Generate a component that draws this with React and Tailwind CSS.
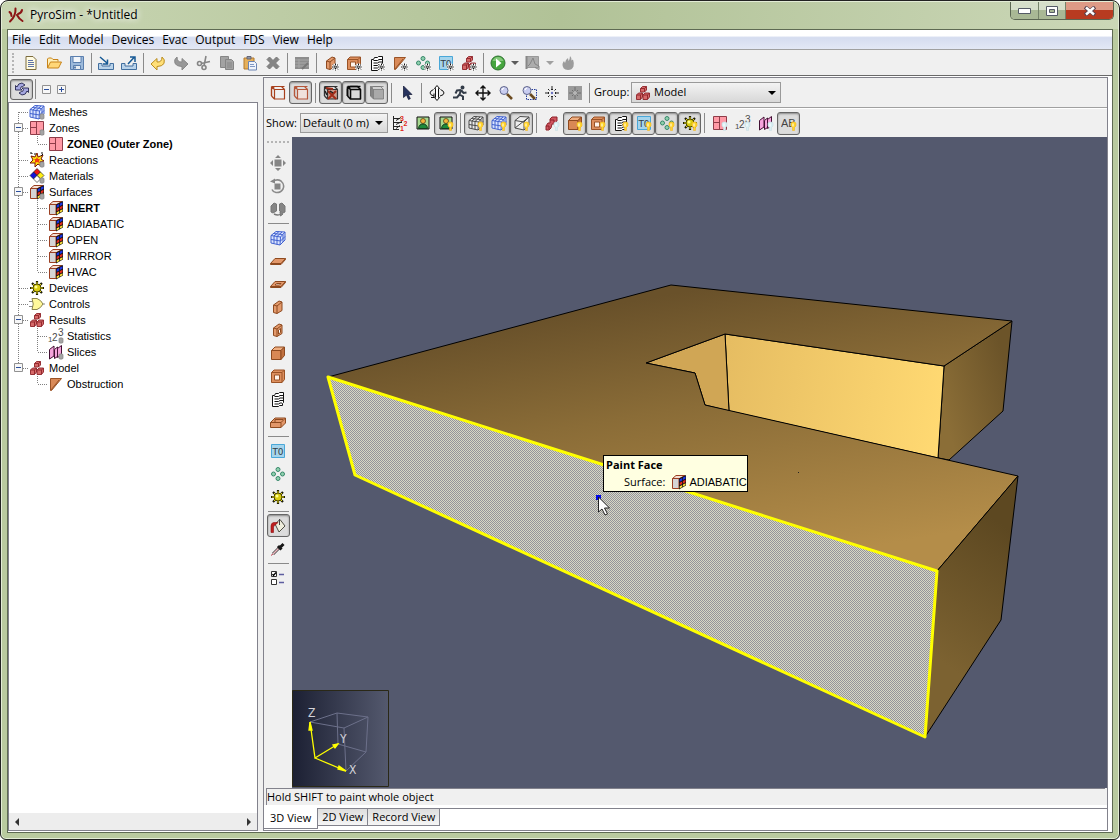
import React, { useState } from 'react'
import clsx from 'clsx'

const Svg = ({ children, size = 16, ...rest }) => (
    <svg width={size} height={size} viewBox="0 0 16 16" fill="none" aria-hidden="true" className="shrink-0" {...rest}>{children}</svg>
)

/* small marks drawn over the corner of an icon */
const Star = () => (
    <g stroke="#111" strokeWidth="1">
        <path d="M12.5 8.5v7M9 12h7M10 9.500l5 5M15 9.500l-5 5" stroke="#fff" strokeWidth="2.400" />
        <path d="M12.500 8.500v7M9 12h7M10 9.500l5 5M15 9.500l-5 5" strokeDasharray="1.600 .5" />
        <path d="M12 11.500h1v1h-1z" fill="#fff" stroke="none" />
    </g>
)
const Bulb = ({ off }) => (
    <g>
        <path d="M10 8.500c0-1 1-1.500 2.500-1.500s2.500.5 2.500 1.500v2.500l-1.500 1.500v3h-2v-3L10 11z" fill={off ? '#d9eef2' : '#ffd52b'} stroke={off ? '#c8dde4' : '#f0b429'} strokeWidth=".6" />
        <path d="M11.500 8.500h1v3h-1z" fill="#fff" />
    </g>
)
const Can = () => <path d="M11 10.500q2-1.500 4 0v4q-2 1.500-4 0z" fill="#a5a5a5" stroke="#858585" strokeWidth=".7" />

const Mesh = ({ c = '#4262cf', f = '#dbe5ff' }) => (
    <g stroke={c} strokeWidth="1">
        <path d="M1 5.500 6 1.500 15 2v8l-5 5-9-2z" fill={f} />
        <path d="M1 5.500 10.500 7 15 2M10.500 7 10 15M4 6v7.500M7 6.500v8M1 9.500l9.500 1.500L15 6.500M13 4.500v7.500M3.500 3.500 12.500 4.500M4 6l5-4.500M7 6.500 12 2" />
    </g>
)
const Cube = ({ top = '#efae80', front = '#d98855', side = '#c0703f', line = '#8e4a20' }) => (
    <g stroke={line} strokeWidth="1" strokeLinejoin="round">
        <path d="M1.500 5.500 5 2h9.500L11 5.500z" fill={top} />
        <path d="M1.500 5.500H11v9H1.500z" fill={front} />
        <path d="M11 5.500 14.500 2v8.500L11 14.500z" fill={side} />
    </g>
)
const Wall = () => (
    <g stroke="#8e4a20" strokeLinejoin="round">
        <path d="M3.500 6 9 2l3 1v8.500L7 14.500l-3.500-1z" fill="#e39a6c" />
        <path d="M3.500 6 7 7l5-4M7 7v7.500" />
    </g>
)
const Room = () => (
    <g stroke="#9a5326">
        <path d="M1.500 4.500 4 2h10.500v9.500l-2.500 3H1.500z" fill="#dd8f5e" />
        <path d="M1.500 4.500H12v10M12 4.500 14.500 2" />
        <path d="M4.500 7h5v5h-5z" fill="#fff3ea" />
    </g>
)
const Vent = () => (
    <g stroke="#111">
        <path d="M2.500 4.500h2l1-2h3l1-1h4v10l-1 1v2h-3l-1 1h-6z" fill="#fff" />
        <path d="M4.500 5.500h4l1.500-1h3M4.500 8h4L10 7h3M4.500 10.500h4L10 9.500h3M4.500 13h4L10 12h2" strokeWidth="1" />
    </g>
)
const Tri = () => <path d="M2.500 2.500h11L3.500 14.500h-1zM3 14 11 4" fill="#d98a58" stroke="#9a5326" />
const Dots = () => (
    <g fill="#8fd0ae" stroke="#37876a">
        <circle cx="8" cy="3.500" r="2" /><circle cx="3.500" cy="8" r="2" /><circle cx="12.500" cy="8" r="2" /><circle cx="8" cy="12.500" r="2" />
    </g>
)
const Temp = () => (
    <g>
        <path d="M1.500 1.500h13v13h-13z" fill="#a5d4ec" stroke="#49a7d8" />
        <text x="8" y="11.500" textAnchor="middle" fontSize="9" fontFamily="DejaVu Sans, sans-serif" fill="#333c44">T0</text>
    </g>
)
const Blocks = () => (
    <g fill="#d66a6a" stroke="#8d2328" strokeWidth=".9" strokeLinejoin="round">
        <path d="M5.500 3.500 7.500 1.500h4v3.500l-2 2h-4z" />
        <path d="M5.500 3.500h4v3.500M9.500 3.500l2-2" />
        <path d="M1.500 10 3.500 8h4v4l-2 2.500h-4z" /><path d="M1.500 10h4v4.500M5.500 10l2-2" />
        <path d="M8 10l2-2h4.500v4l-2 2.500H8z" /><path d="M8 10h4.500v4.500M12.500 10l2-2" />
    </g>
)
const Zone = () => (
    <g fill="#ff9aa6" stroke="#8f3c48">
        <path d="M1.500 1.500h13v13h-13zM7.500 1.500v13M1.500 7.500h6" />
    </g>
)
const Surface = () => (
    <g strokeLinejoin="round">
        <path d="M1.500 4.500 5 1.500h9L8.500 4.500z" fill="#f3dfd2" stroke="#9b3f22" />
        <path d="M1.500 4.500H8v10H1.500z" fill="#d5d5d5" stroke="#9b3f22" />
        <path d="M8 4.500 15 1v10.500l-7 4z" fill="#131313" />
        <path d="M8.700 5.200l2.500-1.200v2.500L8.700 7.800zM12 3.500l2.500-1.200v2.500L12 6z" fill="#1c35e8" />
        <path d="M8.700 8.800l2.500-1.200V10L8.700 11.300zM12 7l2.500-1.200v2.500L12 9.500z" fill="#e22b1d" />
        <path d="M8.700 12.300l2.500-1.200v2L8.700 14.500zM12 10.500l2.500-1.200v2L12 12.600z" fill="#ffe13a" />
    </g>
)
const Gear = () => (
    <g>
        <path d="M8 1v14M1 8h14M3 3l10 10M13 3 3 13" stroke="#1c1c05" strokeWidth="2.200" />
        <circle cx="8" cy="8" r="4" fill="#d9cc10" stroke="#4d4806" />
        <path d="M8 2v2M8 12v2M2 8h2M12 8h2M4 4l1 1M12 4l-1 1M4 12l1-1M12 12l-1-1" stroke="#e6da1b" />
        <circle cx="7" cy="7" r="1.500" fill="#ffff8d" />
    </g>
)
const Slice = () => (
    <g fill="#f6a3dc" stroke="#421033">
        <path d="M1.500 5.500 6 2v10l-4.500 3z" /><path d="M6.500 5.500 9.500 3v9.500l-3 2z" /><path d="M9.500 4.500 13.500 1.500V11l-4 2.500z" />
    </g>
)
const Nums = () => (
    <g fill="#4b4b4b" fontFamily="Liberation Sans, sans-serif">
        <text x="0" y="14" fontSize="8">1</text>
        <text x="4" y="12.500" fontSize="10">2</text>
        <text x="10" y="8" fontSize="10">3</text>
    </g>
)
const WireCube = ({ c = '#a8401c', back = true, f = 'none', w = 1.2 }) => (
    <g stroke={c} strokeWidth={w}>
        <path d="M1.500 5.500 5 2h9.500v8.500L11 14H1.500z" fill={f} />
        <path d="M1.500 5.500H11V14M11 5.500 14.500 2" />
        {back && <path d="M5 2v8.500h9.500M5 10.500 1.500 14" />}
    </g>
)
/* open front box, drawn without its back corner */
const Box = ({ c, f, w = 1.2 }) => (
    <g stroke={c} strokeWidth={w} strokeLinejoin="round">
        <path d="M1.500 11V4l3-2.500h10" />
        <path d="M1.500 11 4.500 14" />
        <path d="M4.500 4.500h10v9.500h-10z" fill={f} />
        <path d="M1.500 1.500h10l3 3M1.500 1.500v9.500M1.500 1.500l3 3" />
    </g>
)
const Person = () => (
    <g>
        <path d="M2 2h12v12H2z" fill="#a7d98f" stroke="#111" />
        <circle cx="8" cy="6" r="2.500" fill="#f5b43c" stroke="#493010" strokeWidth=".7" />
        <path d="M3.500 13.500Q4 9 8 9t4.500 4.500z" fill="#1d8a3b" stroke="#153d1d" />
    </g>
)
const Lens = () => (
    <g>
        <path d="m9 9 5 5" stroke="#6b4a1f" strokeWidth="2.600" />
        <circle cx="6" cy="5.500" r="4" fill="#c9cdf0" stroke="#62678c" />
        <path d="M4 5q.3-1.500 2-2" stroke="#fff" strokeWidth="1.300" />
    </g>
)
const Cross = () => <path d="M8 1v14M1 8h14M5.500 3.500 8 1l2.500 2.500M5.500 12.500 8 15l2.500-2.500M3.500 5.500 1 8l2.500 2.500M12.500 5.500 15 8l-2.500 2.500" stroke="#111" strokeWidth="1.400" />

const icons = {
    fresh: <g><path d="M3 1.500h7l3 3v10H3z" fill="#fffbe2" stroke="#7c6c3c" /><path d="M5 5.500h5M5 7.500h6M5 9.500h6M5 11.500h6" stroke="#5f74a8" /></g>,
    open: <g stroke="#c78319"><path d="M1.500 13V4l1-1h3l1.500 1.500h5v2" fill="#fff0b8" /><path d="M1.500 13 4.500 7h11l-3 6z" fill="#ffd778" /></g>,
    save: <g stroke="#5b7fae"><path d="M1.500 1.500h13v13h-13z" fill="#9dbadb" /><path d="M4 1.500h8v6H4z" fill="#f2f6fb" /><path d="M4.500 10.500h7v4h-7z" fill="#e9eef2" /><path d="M6 11.500v2" strokeWidth="2" /></g>,
    load: <g><path d="M.5 8.500v6h15v-6H12V11H4V8.500z" fill="#b9d3ea" stroke="#426f9f" /><path d="m2 2 7 6M9.500 4.500V9H5" stroke="#175a95" strokeWidth="1.500" /></g>,
    dump: <g><path d="M.5 8.500v6h15v-6H12V11H4V8.500z" fill="#b9d3ea" stroke="#426f9f" /><path d="m7 9 6-6.500M9 2h5v5" stroke="#175a95" strokeWidth="1.500" /></g>,
    undo: <path d="M1 9 7 3.500V7q5 .5 5-5 3.500 2.500 2 6.500Q12 11.500 7 11.500V15z" fill="#ffdf77" stroke="#b98c20" />,
    redo: <path d="M15 9 9 3.500V7Q4 7.500 4 2 .5 4.500 2 8.500q2 3 7 3V15z" fill="#989898" stroke="#888" />,
    cut: <g stroke="#858585" strokeWidth="1.600"><circle cx="3.500" cy="8.500" r="2" /><circle cx="8" cy="12.500" r="2" /><path d="m5 8.500 9-2M8 11l2-10" /></g>,
    copy: <g fill="#a3a3a3" stroke="#868686"><path d="M1.500 1.500h8v11h-8z" /><path d="M6.500 4.500h6l2 2v8h-8z" /><path d="M8 8h5M8 10h5M8 12h5" /></g>,
    paste: <g><path d="M2 3h10v11H2z" fill="#e6b05a" stroke="#b47b2c" /><path d="M5 1.500h4v2.500H5z" fill="#8f98a8" stroke="#667" /><path d="M6.500 6.500h6l2 2v6.500h-8z" fill="#eef3fc" stroke="#6b84b3" /><path d="M8 9.500h4M8 11.500h5" stroke="#7f97c4" /></g>,
    kill: <path d="m2 4.500 2.500-2.500L8 5.500 11.500 2 14 4.500 10.500 8l3.500 3.500-2.500 2.500L8 10.500 4.500 14 2 11.500 5.500 8z" fill="#858585" stroke="#787878" />,
    edit: <g><path d="M1 2h14v12H1z" fill="#8d8d8d" /><path d="M1 5h14M1 8h14M1 11h14M5 4v9" stroke="#a8a8a8" /><path d="m8 14 6-6" stroke="#777" strokeWidth="2" /></g>,
    newWall: <><Wall /><Star /></>, newRoom: <><Room /><Star /></>, newVent: <><Vent /><Star /></>,
    newTri: <><Tri /><Star /></>, newDots: <><Dots /><Star /></>, newTemp: <><Temp /><Star /></>, newBlocks: <><Blocks /><Star /></>,
    run: <g><circle cx="8" cy="8" r="7" fill="#46a53e" stroke="#2f7030" /><path d="M2.500 6Q4 2 8 2t5.500 4z" fill="#83c97a" /><path d="M6 3.500 11.500 8 6 12.500z" fill="#fff" /></g>,
    plot: <g><path d="M1.500 1.500h12v11h-12z" fill="#adadad" stroke="#999" /><path d="M3 11 5 9l3-6 2 6 4 2v3.500l-4-2" stroke="#858585" /><path d="M1.500 1v13" stroke="#888" strokeWidth="2" /></g>,
    flame: <path d="M8 15Q2 14.500 2.500 9q.5-2 1.500-3l1 2q0-3 3-5l.5 3Q10 4 10 1q2 2 1.500 4.500L13 4.500q1.500 4 .5 7Q12 15 8 15z" fill="#9c9c9c" />,
    sync: <g stroke="#252550" strokeWidth=".9" fill="#a5a7e0"><path d="M1.500 9V4.500L3 6q1-4 5-4l3 2-2.500 1.500Q7 5 6.500 7.500L8 9z" /><path d="M14.500 7v4.500L13 10q-1 4-5 4l-3-2 2.500-1.500Q9 11 9.500 8.500L8 7z" /></g>,
    wire: <Box c="#a8401c" f="none" />, outline: <Box c="#b5573a" f="#f0e2dc" />,
    tex: <g><Box c="#333" f="#c99a8a" /><path d="m5 6 8 8M13 6l-8 8M3 3l7 1" stroke="#a12c18" strokeWidth="2" /><path d="m2 6 2 4M7 6l3 2" stroke="#1f1f1f" strokeWidth="1.500" /></g>,
    edge: <Box c="#0a0a0a" f="#d9d9d9" w={1.6} />,
    solid: <g><path d="M1.500 1.500h10l3 3H4.500z" fill="#cfcfcf" /><path d="M1.500 1.500v9.500l3 3V4.500z" fill="#858585" /><Box c="#777" f="#a9a9a9" w={.8} /></g>,
    arrow: <path d="M4.500 1v11.500L7.500 10l2 4.500 1.800-.8-2-4.200H13z" fill="#28345f" stroke="#0b1230" strokeWidth=".7" />,
    orbit: <g stroke="#111"><path d="M8 .5 10.500 3.500H9.500v9h1L8 15.500l-2.500-3h1v-9h-1z" fill="#fff" /><path d="M4.500 4.500Q1 6 1 8t4 3M5 8.500v4H2M11.500 4.500Q15 6 15 8t-4 3" /></g>,
    walk: <g stroke="#333c49" strokeWidth="2"><circle cx="10.500" cy="2.500" r="1" fill="#333c49" /><path d="M9 5 7.500 9.500l3.500 2V15M7.500 9.500 5 12.500H1M9 5 5 5.500l-1.500 3M9 5l2.500 3 3-.5" /></g>,
    pan: <Cross />, lens: <Lens />,
    lensBox: <g><path d="M5.500 4.500h10v10h-10z" stroke="#253c9b" strokeDasharray="1.500 1" /><Lens /></g>,
    center: <g stroke="#222"><path d="M8 1v4M8 11v4M1 8h4M11 8h4M4 4l1.500 1.500M12 4l-1.500 1.500M4 12l1.500-1.500M12 12l-1.500-1.500M7 4.500h2M7 11.500h2M4.500 7v2M11.500 7v2" /><circle cx="8" cy="8" r="1.200" fill="#6b72c0" stroke="none" /></g>,
    reset: <g><path d="M1 1h14v14H1z" fill="#9b9b9b" /><path d="M8 2v4M8 10v4M2 8h4M10 8h4M5 5l6 6M11 5l-6 6" stroke="#6f6f6f" /><circle cx="8" cy="8" r="2" fill="#b5b5b5" /></g>,
    floors: (
        <g stroke="#222">
            <path d="M1.500 1v14M1 3.500h7M1 7.500h9M1 11.500h7M1 14.500h6M4 5.500l5-3M4 9.500l6-3M4 13.500l4-3" />
            <g fill="#e02818" stroke="none" fontSize="7" fontWeight="bold" fontFamily="Liberation Sans, sans-serif"><text x="8" y="5.500">3</text><text x="11.500" y="10.500">2</text><text x="8" y="15.500">1</text></g>
        </g>
    ),
    person: <Person />, personOn: <><Person /><Bulb /></>,
    meshGrey: <><Mesh c="#4b4b4b" f="#ededed" /><Bulb /></>, meshBlue: <><Mesh /><Bulb /></>,
    meshLine: <><g stroke="#4d4d4d"><path d="M1 5.500 6 1.500 15 2v8l-5 5-9-2z" fill="#eee" /><path d="M1 5.500 10 7l5-5M10 7v8M1 13 15 2" /></g><Bulb /></>,
    blocksOff: <g><path d="M6 4 8 2h5v4l-3 3H8l-1 4-2 2H2v-4l2-3h2z" fill="#cf5560" stroke="#8d2328" /><path d="M6 5h4v3M2 11h3v3" stroke="#8d2328" /><Bulb off /></g>,
    cubeOn: <><Cube /><Bulb /></>, roomOn: <><Room /><Bulb /></>, ventOn: <><Vent /><Bulb /></>, tempOn: <><Temp /><Bulb /></>,
    dotsOn: <><Dots /><Bulb /></>, gearOn: <><Gear /><Bulb /></>, zoneOff: <><Zone /><Bulb off /></>, numsOff: <><Nums /><Bulb off /></>, sliceOff: <><Slice /><Bulb off /></>,
    labels: <g><text x="0" y="12" fontSize="11" fontFamily="Liberation Sans, sans-serif" fill="#444">AB</text><Bulb /></g>,
    mesh: <Mesh />,
    move: <g fill="#858585"><path d="M4.500 4.500h7v7h-7zM8 0l3 3H5zM8 16l-3-3h6zM0 8l3-3v6zM16 8l-3 3V5z" /></g>,
    rotate: <g><path d="M4.500 5.500h6v6h-6z" fill="#858585" /><path d="M3 3.500q4-3 8-.5 4 3.500 2 8-2.500 4-7 3.500-3-.5-4-3" stroke="#8a8a8a" strokeWidth="1.600" /><path d="M0 3.500 5 .5v5z" fill="#858585" /></g>,
    mirror: <g fill="#858585" stroke="#777"><path d="M1 5 4 2l2.500 1v7L3 12l-2-1zM15 5l-3-3-2.500 1v7l3.500 2 2-1z" /><path d="M4 13q4 2 7 0" strokeWidth="1.500" fill="none" /><path d="m10 11 3 2-2.500 2z" /></g>,
    slab: <g fill="#e2976a" stroke="#8e4a20"><path d="M.5 10.500 5 5.500h10.500v1l-4.500 5H.5z" /><path d="M.5 10.500H11l4.500-5" /></g>,
    slabHole: <g fill="#e2976a" stroke="#8e4a20"><path d="M.5 10.500 5 5.500h10.500v1l-4.500 5H.5z" /><path d="M.5 10.500H11l4.500-5" /><path d="M5 9 6.500 7.500h4.500L9.500 9z" fill="#fff" /></g>,
    wall: <Wall />, wallHole: <g><Wall /><path d="M8.500 8 10.500 6.500v4l-2 1.500z" fill="#fff" stroke="#8e4a20" /></g>,
    cube: <Cube />, room: <Room />, vent: <Vent />,
    tray: <g stroke="#8e4a20"><path d="M.5 8.500 5 4h10.500v5L11 13.500H.5z" fill="#e2976a" /><path d="M.5 8.500H11l4.500-4.500M11 8.500v5M5 8.500V5.500h8" /></g>,
    temp: <Temp />, dots: <Dots />, gear: <Gear />,
    bucket: <g><path d="M5 6 10 1.500l5 6.500-6 6z" fill="#efeedd" stroke="#4d4d42" /><path d="M9.500 1v6" stroke="#444" /><path d="M8 4.500H3.500Q1 5 1 8v6.500h2.500V9Q4 7 6 6.500z" fill="#be1e1e" stroke="#8b0f13" strokeWidth=".6" /></g>,
    picker: <g><path d="m3 13 6-6" stroke="#4b4b4b" strokeWidth="3" /><path d="m3 13 5.500-5.500" stroke="#ebb6bd" strokeWidth="1.500" /><path d="m8 5 3.500 3.500M10 6.500 13.500 3" stroke="#161616" strokeWidth="3" /><path d="m1.500 14.500 1-1.500" stroke="#b4182b" /></g>,
    checks: <g><path d="M1.500 1.500h5v5h-5zM1.500 9.500h5v5h-5z" fill="#fff" stroke="#333" /><path d="m2.500 4 1 1.500L6 2.500" stroke="#000" strokeWidth="1.300" /><path d="M9 4.500h5M9 12.500h5" stroke="#5d5da0" strokeWidth="1.600" /></g>,
    meshes: <><Mesh /><Can /></>, zones: <><Zone /><Can /></>, zone: <Zone />,
    reactions: <g><path d="m8 1 1 4 5-2-2 4 3 2-4 1 1 4-3-2-3 3v-4l-5 0 3-3-2-4 4 1z" fill="#ffe312" stroke="#7a1005" /><path d="m8 5 1 2 2 0-1 2 1 2-3-1-2 1 0-3-1-1 2 0z" fill="#f33d12" /><path d="M1 1h2v1M5 2h2M12 1h2M14 2l-2 2" stroke="#111" /><Can /></g>,
    materials: <g stroke="#111" strokeWidth=".6"><path d="M8 .5 11.500 4 8 7.500 4.500 4z" fill="#ee1616" /><path d="M4.500 4 8 7.500 4.500 11 1 7.500z" fill="#1313dc" /><path d="M11.500 4 15 7.500 11.500 11 8 7.500z" fill="#ffee14" /><path d="M8 7.500 11.500 11 8 14.500 4.500 11z" fill="#fff" /><Can /></g>,
    surfaces: <><Surface /><Can /></>, surface: <Surface />, devices: <Gear />,
    controls: <g><path d="M0 5.500h4M0 10.500h4M13 8h3" stroke="#888" /><path d="M3 2.500h5q4 1.500 6 5.500-2 4-6 5.500H3q2.500-5.500 0-11z" fill="#fff89a" stroke="#8b844a" /></g>,
    blocks: <Blocks />, stats: <><Nums /><Can /></>, slices: <><Slice /><Can /></>, tri: <Tri />
}

const Icon = ({ name }) => <Svg>{icons[name]}</Svg>

const mainTools = [
    ['fresh', 'New'], ['open', 'Open'], ['save', 'Save'], '|', ['load', 'Import'], ['dump', 'Export'], '|',
    ['undo', 'Undo'], ['redo', 'Redo'], ['cut', 'Cut'], ['copy', 'Copy'], ['paste', 'Paste'], ['kill', 'Delete'], '|', ['edit', 'Edit'], '|',
    ['newWall', 'New wall'], ['newRoom', 'New room'], ['newVent', 'New vent'], ['newTri', 'New obstruction'], ['newDots', 'New particles'], ['newTemp', 'New temperature'], ['newBlocks', 'New group'], '|',
    ['run', 'Run'], 'v', ['plot', 'Plot'], 'w', ['flame', 'Smokeview']
]
const viewTools = [
    ['wire', 'Wireframe'], ['outline', 'Outline', 1], '|', ['tex', 'Textures', 1], ['edge', 'Edges', 1], ['solid', 'Solid', 1], '|', ['arrow', 'Select'], '|',
    ['orbit', 'Orbit'], ['walk', 'Roam'], ['pan', 'Pan'], ['lens', 'Zoom'], ['lensBox', 'Zoom box'], ['center', 'Center'], ['reset', 'Reset view'], '|'
]
const showTools = [
    ['floors', 'Floors'], ['person', 'Background'], ['personOn', 'Show background', 1], '|', ['meshGrey', 'Grid', 1], ['meshBlue', 'Mesh', 1], ['meshLine', 'Bounds', 1], '|',
    ['blocksOff', 'Groups'], ['cubeOn', 'Obstructions', 1], ['roomOn', 'Holes', 1], ['ventOn', 'Vents', 1], ['tempOn', 'Temperature', 1], ['dotsOn', 'Particles', 1], ['gearOn', 'Devices', 1], '|',
    ['zoneOff', 'Zones'], ['numsOff', 'Statistics'], ['sliceOff', 'Slices'], ['labels', 'Labels', 1]
]
const drawTools = [
    ['move', 'Move'], ['rotate', 'Rotate'], ['mirror', 'Mirror'], '|', ['mesh', 'Draw mesh'], ['slab', 'Draw slab'], ['slabHole', 'Draw slab hole'], ['wall', 'Draw wall'], ['wallHole', 'Draw wall hole'],
    ['cube', 'Draw block'], ['room', 'Draw block hole'], ['vent', 'Draw vent'], ['tray', 'Draw room'], '|', ['temp', 'Temperature region'], ['dots', 'Particle cloud'], ['gear', 'Place device'], '|',
    ['bucket', 'Paint', 1], ['picker', 'Pick color'], '|', ['checks', 'Tool properties']
]

const separators = {
    narrow: 'w-px h-5 ml-[3px] mr-[2px]',
    wide: 'w-px h-5 mx-[3px]',
    vertical: 'h-px w-[21px] mt-[3px] mb-[2px]'
}

function Tool ({ tool, sep = 'wide' }) {
    if(tool==='|') return <span className={clsx('shrink-0 bg-[#8a8a8a]', separators[sep])} />
    if(tool==='v' || tool==='w') {
        return (
            <button aria-label="More" className="w-3 h-[23px] flex items-center justify-center">
                <svg width="8" height="4" viewBox="0 0 8 4"><path d="M0 0h8L4 4z" fill={tool==='v' ? '#5c5c5c' : '#a0a0a0'} /></svg>
            </button>
        )
    }
    const [icon,label,pressed]= tool
    return (
        <button
            aria-label={label}
            aria-pressed={!!pressed}
            className={clsx('w-[23px] h-[23px] shrink-0 flex items-center justify-center', pressed && 'border border-[#666] rounded-[3px] bg-[#dcdcdc] shadow-[inset_0_1px_2px_#888]')}
        >
            <Icon name={icon} />
        </button>
    )
}

const tree = [
    { label: 'Meshes', icon: 'meshes' },
    { label: 'Zones', icon: 'zones', children: [{ label: 'ZONE0 (Outer Zone)', icon: 'zone', bold: true }] },
    { label: 'Reactions', icon: 'reactions' },
    { label: 'Materials', icon: 'materials' },
    {
        label: 'Surfaces', icon: 'surfaces', children: [
            { label: 'INERT', icon: 'surface', bold: true }, { label: 'ADIABATIC', icon: 'surface' }, { label: 'OPEN', icon: 'surface' },
            { label: 'MIRROR', icon: 'surface' }, { label: 'HVAC', icon: 'surface' }
        ]
    },
    { label: 'Devices', icon: 'devices' },
    { label: 'Controls', icon: 'controls' },
    { label: 'Results', icon: 'blocks', children: [{ label: 'Statistics', icon: 'stats' }, { label: 'Slices', icon: 'slices' }] },
    { label: 'Model', icon: 'blocks', children: [{ label: 'Obstruction', icon: 'tri' }] }
]

const Branch = ({ first, last, empty }) => (
    <svg width="19" height="16" viewBox="0 0 19 16" className="shrink-0" aria-hidden="true">
        <path d={empty ? (last ? '' : 'M8.500 0v16') : `M8.500 ${first ? 8 : 0}V${last ? 8 : 16}M9 8.500h10`} stroke="#808080" strokeDasharray="1 1" />
    </svg>
)
const Sign = ({ plus }) => (
    <svg width="9" height="9" viewBox="0 0 9 9" aria-hidden="true">
        <path d="M.5.5h8v8h-8z" fill="#f7f7f7" stroke="#919191" />
        <path d={plus ? 'M2 4.500h5M4.500 2v5' : 'M2 4.500h5'} stroke="#2b4f9e" />
    </svg>
)

function TreeNode ({ node, first, last }) {
    const [open,setOpen]= useState(true)
    return (
        <li>
            <div className="h-4 flex items-center">
                {node.children ? (
                    <button onClick={()=> setOpen(!open)} aria-label={`Toggle ${node.label}`} className="relative flex">
                        <Branch first={first} last={last} />
                        <span className="absolute left-1 top-[3px]"><Sign plus={!open} /></span>
                    </button>
                ) : <Branch first={first} last={last} />}
                <Icon name={node.icon} />
                <span className="pl-1 whitespace-nowrap">{node.label}</span>
            </div>
            {node.children && open && (
                <ul>
                    {node.children.map((child,i)=> (
                        <li key={child.label} className="h-4 flex items-center">
                            <Branch empty last={last} />
                            <Branch last={i===node.children.length-1} />
                            <Icon name={child.icon} />
                            <span className={clsx('pl-[3px] whitespace-nowrap', child.bold && 'font-bold')}>{child.label}</span>
                        </li>
                    ))}
                </ul>
            )}
        </li>
    )
}

const Caret = () => <svg width="8" height="4" viewBox="0 0 8 4" className="shrink-0 mr-1" aria-hidden="true"><path d="M0 0h8L4 4z" fill="#000" /></svg>

function Scene () {
    return (
        <svg width="816" height="650" viewBox="292 137 816 650" className="block shrink-0" role="img" aria-label="3D model">
            <defs>
                <linearGradient id="top" gradientUnits="userSpaceOnUse" x1="720" y1="285" x2="770" y2="565">
                    <stop offset="0" stopColor="#69512a" /><stop offset=".4" stopColor="#8a6c37" /><stop offset="1" stopColor="#b48d49" />
                </linearGradient>
                <linearGradient id="lit" gradientUnits="userSpaceOnUse" x1="725" y1="370" x2="944" y2="400">
                    <stop offset="0" stopColor="#e6bd62" /><stop offset="1" stopColor="#ffd972" />
                </linearGradient>
                <linearGradient id="end" gradientUnits="userSpaceOnUse" x1="925" y1="650" x2="1010" y2="530">
                    <stop offset="0" stopColor="#7c6231" /><stop offset="1" stopColor="#5d4821" />
                </linearGradient>
                <linearGradient id="endBack" gradientUnits="userSpaceOnUse" x1="940" y1="400" x2="1010" y2="380">
                    <stop offset="0" stopColor="#8b6e37" /><stop offset="1" stopColor="#6c5429" />
                </linearGradient>
                <linearGradient id="axes"><stop offset="0" stopColor="#1c2033" /><stop offset="1" stopColor="#54596e" /></linearGradient>
                <pattern id="stipple" width="2" height="2" patternUnits="userSpaceOnUse">
                    <path d="M0 0h2v2H0z" fill="#d8d8c4" /><path d="M0 0h1v1H0zM1 1h1v1H1z" fill="#94949c" />
                </pattern>
            </defs>
            <g stroke="#000" strokeWidth="1" strokeLinejoin="round">
                <path d="M944 366 1012 321 1003 411 949 460 938 458z" fill="url(#endBack)" />
                <path d="M725 334 944 366 938 458 729 411z" fill="url(#lit)" />
                <path d="M725 334 646 363 695 373 705 405 729 411z" fill="#d0a655" />
                <path d="M328 377 671 285 1012 321 944 366 725 334 646 363 695 373 705 405 1018 476 937 571z" fill="url(#top)" />
                <path d="M937 571 1018 476 1001 620 925 737z" fill="url(#end)" />
            </g>
            <path d="M328 377 937 571 925 737 355 475z" fill="url(#stipple)" stroke="#ff0" strokeWidth="3" strokeLinejoin="round" />
            <path d="M798 472h1v1h-1z" fill="#222" />
            <path d="M292.500 690.500h96v96h-96z" fill="url(#axes)" stroke="#2a2817" />
            <g stroke="#6c708a">
                <path d="M310 722 337 713 368 717 344 728zM337 713 338 744 366 752 368 717M344 728 346 771 366 752" fill="none" />
            </g>
            <g stroke="#ff0" strokeWidth="1.300" fill="#ff0">
                <path d="M310 722 315 758 338 744M315 758 346 771" fill="none" />
                <path d="M310 722 309 730 312 730zM338 744 333 745 335 748zM346 771 339 766 338 769z" />
            </g>
            <g fill="#d2d2d8" fontFamily="DejaVu Sans Condensed, Liberation Sans, sans-serif" fontSize="12">
                <text x="308" y="717">Z</text><text x="340" y="743">Y</text><text x="349" y="774">X</text>
            </g>
            <path d="M596 495h5v5h-5z" fill="#0008e8" />
            <path d="M598.500 497v15l3.500-3 3 6 2.500-1-3-6h5z" fill="#fff" stroke="#222" />
        </svg>
    )
}

const menus = ['File', 'Edit', 'Model', 'Devices', 'Evac', 'Output', 'FDS', 'View', 'Help']
const tabs = ['3D View', '2D View', 'Record View']

function App () {
    const [tab,setTab]= useState('3D View')

    return (
        <div className="h-screen flex flex-col overflow-hidden rounded-t-lg rounded-b-md border border-[#222] bg-[#b9ca9f] px-[6px] pb-[6px] font-['Open_Sans','Noto_Sans',sans-serif] text-[11px] text-black shadow-[inset_0_0_0_1px_#e3ecd6]">
            <header className="h-[27px] shrink-0 -mx-[5px] mt-px pl-[6px] pr-[4px] flex items-start bg-linear-to-r from-[#c9d6b3] via-[#b1c297] via-50% to-[#cbd7b7] rounded-t-lg">
                <Svg className="mt-[5px] shrink-0">
                    <path d="M7.500 1.500Q8 9 2 14.500M9 8q2 4 5.500 6" stroke="#8c1515" strokeWidth="2" strokeLinecap="round" />
                    <path d="M1.500 5q2 1 2 4M14 3q-.5 3-4 4" stroke="#8c1515" strokeWidth="2" strokeLinecap="round" />
                </Svg>
                <h1 className="pl-[6px] mt-[5px] text-[12px] leading-4 font-normal [text-shadow:0_0_6px_#fff,0_0_8px_#fff]">PyroSim - *Untitled</h1>
                <div className="ml-auto h-[18px] flex border border-t-0 border-[#5b6652] rounded-b-[5px] overflow-hidden">
                    <button aria-label="Minimize" className="w-[28px] flex items-center justify-center border-r border-[#76836a] bg-linear-to-b from-[#d6dfca] from-50% to-[#a9b895] to-50%">
                        <svg width="13" height="6"><path d="M.5.5h12v5H.5z" fill="#fff" stroke="#555b66" /></svg>
                    </button>
                    <button aria-label="Maximize" className="w-[27px] flex items-center justify-center border-r border-[#76836a] bg-linear-to-b from-[#d6dfca] from-50% to-[#a9b895] to-50%">
                        <svg width="12" height="10"><path d="M.5.5h11v9H.5z" fill="#fff" stroke="#555b66" /><path d="M3.500 3.500h5v3h-5z" fill="#a9b895" stroke="#555b66" /></svg>
                    </button>
                    <button aria-label="Close" className="w-[47px] flex items-center justify-center bg-linear-to-b from-[#dd9a86] from-45% to-[#b83b20] to-50%">
                        <svg width="12" height="10" viewBox="0 0 12 10"><path d="m1 1 10 8M11 1 1 9" stroke="#5b4450" strokeWidth="4" /><path d="m2 1.500 8 7M10 1.500l-8 7" stroke="#fff" strokeWidth="2.400" /></svg>
                    </button>
                </div>
            </header>

            <div className="flex-1 min-h-0 flex flex-col border border-[#5e6a53] bg-[#f0f0f0]">
                <nav className="h-5 shrink-0 pl-1 flex items-center gap-2 text-[12px] border-b border-[#a0a0a0] bg-linear-to-b from-white from-30% via-[#d5dcef] via-40% to-[#e3e8f5]">
                    {menus.map(item=> <button key={item}>{item}</button>)}
                </nav>
                <div role="toolbar" aria-label="Main" className="h-[26px] shrink-0 pl-1 flex items-center border-b border-[#696969]">
                    <span className="h-5 mr-[5px] border-l-2 border-dotted border-[#b5b5b5]" />
                    {mainTools.map((tool,i)=> <Tool key={i} tool={tool} sep="narrow" />)}
                </div>

                <div className="flex-1 min-h-0 flex pr-1 pb-px bg-white">
                    <aside className="w-[250px] shrink-0 flex flex-col bg-[#f0f0f0]">
                        <div className="h-[26px] shrink-0 pl-[2px] flex items-center">
                            <button aria-label="Sync selection" aria-pressed="true" className="w-[23px] h-[21px] flex items-center justify-center border border-[#666] rounded-[3px] bg-[#dcdcdc] shadow-[inset_0_1px_2px_#888]"><Icon name="sync" /></button>
                            <span className="w-px h-5 ml-[2px] mr-[6px] bg-[#8a8a8a]" />
                            <button aria-label="Collapse all" className="mr-[6px]"><Sign /></button>
                            <button aria-label="Expand all"><Sign plus /></button>
                        </div>
                        <div className="flex-1 min-h-0 flex flex-col border border-[#82828c] bg-white">
                            <ul className="flex-1 pt-px pl-px overflow-hidden font-['Liberation_Sans',sans-serif] leading-4">
                                {tree.map((node,i)=> <TreeNode key={node.label} node={node} first={i===0} last={i===tree.length-1} />)}
                            </ul>
                            <div className="h-[17px] shrink-0 px-[6px] flex items-center justify-between bg-[#ededed]">
                                <button aria-label="Scroll left"><svg width="4" height="8" viewBox="0 0 4 8"><path d="M4 0v8L0 4z" fill="#333" /></svg></button>
                                <button aria-label="Scroll right"><svg width="4" height="8" viewBox="0 0 4 8"><path d="M0 0v8l4-4z" fill="#333" /></svg></button>
                            </div>
                        </div>
                    </aside>
                    <div className="w-[5px] shrink-0 bg-[#f0f0f0]" />

                    <main className="flex-1 min-w-0 mt-px flex flex-col border border-[#82828c] bg-[#f0f0f0]">
                        <div role="toolbar" aria-label="View" className="h-[30px] shrink-0 pl-[2px] flex items-center border-b border-[#a0a0a0]">
                            {viewTools.map((tool,i)=> <Tool key={i} tool={tool} />)}
                            <label htmlFor="group" className="pl-px w-[38px] whitespace-nowrap">Group:</label>
                            <div className="w-[150px] h-[21px] pl-[3px] flex items-center border border-[#9a9a9a] bg-linear-to-b from-[#f3f3f3] to-[#d8d8d8]">
                                <Icon name="blocks" />
                                <select id="group" className="appearance-none flex-1 min-w-0 pl-[3px] bg-transparent"><option>Model</option></select>
                                <Caret />
                            </div>
                        </div>
                        <div role="toolbar" aria-label="Show" className="h-[29px] shrink-0 pl-[2px] flex items-center border-t border-white">
                            <label htmlFor="floor" className="w-[34px] whitespace-nowrap">Show:</label>
                            <div className="w-[88px] h-[20px] flex items-center border border-[#9a9a9a] bg-linear-to-b from-[#f3f3f3] to-[#d8d8d8]">
                                <select id="floor" className="appearance-none flex-1 min-w-0 pl-[2px] bg-transparent"><option>Default (0 m)</option></select>
                                <Caret />
                            </div>
                            {showTools.map((tool,i)=> <Tool key={i} tool={tool} />)}
                        </div>

                        <div className="flex-1 min-h-0 flex">
                            <div role="toolbar" aria-label="Draw" className="w-[28px] shrink-0 flex flex-col items-center overflow-hidden">
                                <span className="w-[22px] mt-1 mb-2 border-t-2 border-dotted border-[#b5b5b5]" />
                                {drawTools.map((tool,i)=> <Tool key={i} tool={tool} sep="vertical" />)}
                            </div>
                            <div className="relative flex-1 min-w-0 overflow-hidden bg-[#54596e]">
                                <Scene />
                                <div role="tooltip" className="absolute left-[311px] top-[318px] w-[145px] h-[37px] pl-[2px] border border-black bg-[#ffffe1]">
                                    <p className="font-bold leading-[18px]">Paint Face</p>
                                    <p className="pl-[18px] flex items-center leading-4">
                                        Surface:
                                        <span className="flex pl-[6px] pr-[2px]"><Icon name="surface" /></span>
                                        <span className="font-['Liberation_Sans',sans-serif]">ADIABATIC</span>
                                    </p>
                                </div>
                            </div>
                        </div>

                        <p className="h-[17px] shrink-0 mx-[2px] border-t border-l border-[#82828c] leading-4">Hold SHIFT to paint whole object</p>
                        <div role="tablist" className="h-[25px] shrink-0 pt-[3px] flex items-start bg-white">
                            {tabs.map(name=> (
                                <button
                                    key={name}
                                    role="tab"
                                    aria-selected={tab===name}
                                    onClick={()=> setTab(name)}
                                    className={clsx('border-r border-b border-[#82828c] whitespace-nowrap', tab===name ? 'h-[21px] px-[6px] bg-white' : 'h-[18px] px-1 border-t bg-linear-to-b from-[#dedede] to-[#f5f5f5]')}
                                >
                                    {name}
                                </button>
                            ))}
                            <span className="flex-1 border-t border-[#82828c]" />
                        </div>
                    </main>
                </div>
            </div>
        </div>
    )
}

export default App
